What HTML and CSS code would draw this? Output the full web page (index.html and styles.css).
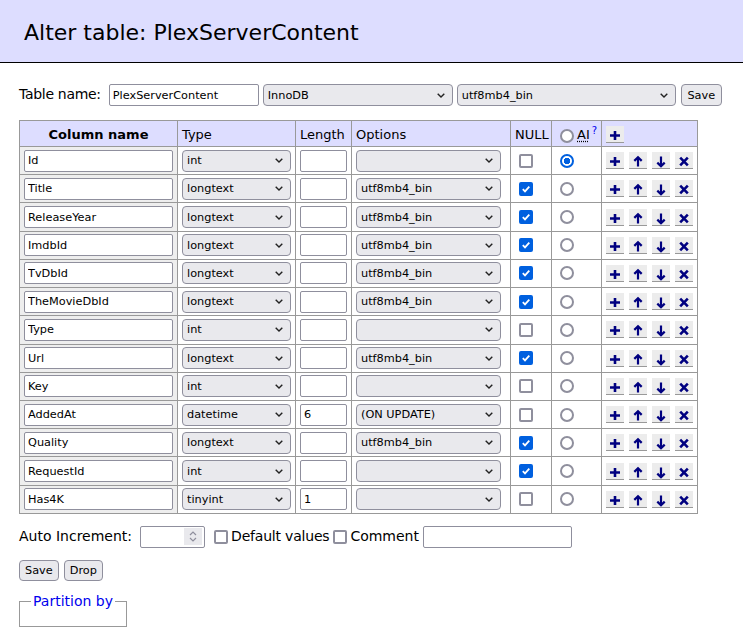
FILE: index.html
```html
<!DOCTYPE html>
<html>
<head>
<meta charset="utf-8">
<title>Alter table: PlexServerContent</title>
<link rel="stylesheet" href="styles.css">
</head>
<body>
<h2 class="title">Alter table: PlexServerContent</h2>
<div class="content">
<form>
<p class="row first"><span class="lbl">Table name:</span><input class="inp tname" value="PlexServerContent"><select class="sel engine"><option>InnoDB</option></select><select class="sel coll"><option>utf8mb4_bin</option></select><button type="button" class="btn top-save">Save</button></p>

<table class="edit">
<thead>
<tr>
<th class="c1">Column name</th>
<td class="c2">Type</td>
<td class="c3">Length</td>
<td class="c4">Options</td>
<td class="c5">NULL</td>
<td class="c6"><div class="ai"><input type="radio" class="rad" name="ai"><abbr title="Auto Increment">AI</abbr><sup><a href="#">?</a></sup></div></td>
<td class="c7"><div class="acts"><button type="button" class="ico"><svg viewBox="0 0 18 16" width="18" height="16"><path class="g" d="M9 5v9M4 9.5h10"/></svg></button></div></td>
</tr>
</thead>
<tbody>
<tr><th class="c1"><input class="inp cname" value="Id"></th><td><select class="sel type"><option>int</option></select></td><td><input class="inp len" value=""></td><td><select class="sel opt"><option></option></select></td><td><div class="box"><input type="checkbox" class="cb"></div></td><td><div class="box"><input type="radio" class="rad" name="ai" checked></div></td><td><div class="acts"><button type="button" class="ico"><svg viewBox="0 0 18 16" width="18" height="16"><path class="g" d="M9 5v9M4 9.5h10"/></svg></button><button type="button" class="ico"><svg viewBox="0 0 18 16" width="18" height="16"><path class="a" d="M9 6v8.5M5.3 8.9L9 5.2l3.7 3.7"/></svg></button><button type="button" class="ico"><svg viewBox="0 0 18 16" width="18" height="16"><path class="a" d="M9 4.5v8.3M5.3 10.6L9 14.3l3.7-3.7"/></svg></button><button type="button" class="ico"><svg viewBox="0 0 18 16" width="18" height="16"><path class="g" d="M5.2 5.7l7.6 7.6M12.8 5.7l-7.6 7.6"/></svg></button></div></td></tr>
<tr><th class="c1"><input class="inp cname" value="Title"></th><td><select class="sel type"><option>longtext</option></select></td><td><input class="inp len" value=""></td><td><select class="sel opt"><option>utf8mb4_bin</option></select></td><td><div class="box"><input type="checkbox" class="cb" checked></div></td><td><div class="box"><input type="radio" class="rad" name="ai"></div></td><td><div class="acts"><button type="button" class="ico"><svg viewBox="0 0 18 16" width="18" height="16"><path class="g" d="M9 5v9M4 9.5h10"/></svg></button><button type="button" class="ico"><svg viewBox="0 0 18 16" width="18" height="16"><path class="a" d="M9 6v8.5M5.3 8.9L9 5.2l3.7 3.7"/></svg></button><button type="button" class="ico"><svg viewBox="0 0 18 16" width="18" height="16"><path class="a" d="M9 4.5v8.3M5.3 10.6L9 14.3l3.7-3.7"/></svg></button><button type="button" class="ico"><svg viewBox="0 0 18 16" width="18" height="16"><path class="g" d="M5.2 5.7l7.6 7.6M12.8 5.7l-7.6 7.6"/></svg></button></div></td></tr>
<tr><th class="c1"><input class="inp cname" value="ReleaseYear"></th><td><select class="sel type"><option>longtext</option></select></td><td><input class="inp len" value=""></td><td><select class="sel opt"><option>utf8mb4_bin</option></select></td><td><div class="box"><input type="checkbox" class="cb" checked></div></td><td><div class="box"><input type="radio" class="rad" name="ai"></div></td><td><div class="acts"><button type="button" class="ico"><svg viewBox="0 0 18 16" width="18" height="16"><path class="g" d="M9 5v9M4 9.5h10"/></svg></button><button type="button" class="ico"><svg viewBox="0 0 18 16" width="18" height="16"><path class="a" d="M9 6v8.5M5.3 8.9L9 5.2l3.7 3.7"/></svg></button><button type="button" class="ico"><svg viewBox="0 0 18 16" width="18" height="16"><path class="a" d="M9 4.5v8.3M5.3 10.6L9 14.3l3.7-3.7"/></svg></button><button type="button" class="ico"><svg viewBox="0 0 18 16" width="18" height="16"><path class="g" d="M5.2 5.7l7.6 7.6M12.8 5.7l-7.6 7.6"/></svg></button></div></td></tr>
<tr><th class="c1"><input class="inp cname" value="ImdbId"></th><td><select class="sel type"><option>longtext</option></select></td><td><input class="inp len" value=""></td><td><select class="sel opt"><option>utf8mb4_bin</option></select></td><td><div class="box"><input type="checkbox" class="cb" checked></div></td><td><div class="box"><input type="radio" class="rad" name="ai"></div></td><td><div class="acts"><button type="button" class="ico"><svg viewBox="0 0 18 16" width="18" height="16"><path class="g" d="M9 5v9M4 9.5h10"/></svg></button><button type="button" class="ico"><svg viewBox="0 0 18 16" width="18" height="16"><path class="a" d="M9 6v8.5M5.3 8.9L9 5.2l3.7 3.7"/></svg></button><button type="button" class="ico"><svg viewBox="0 0 18 16" width="18" height="16"><path class="a" d="M9 4.5v8.3M5.3 10.6L9 14.3l3.7-3.7"/></svg></button><button type="button" class="ico"><svg viewBox="0 0 18 16" width="18" height="16"><path class="g" d="M5.2 5.7l7.6 7.6M12.8 5.7l-7.6 7.6"/></svg></button></div></td></tr>
<tr><th class="c1"><input class="inp cname" value="TvDbId"></th><td><select class="sel type"><option>longtext</option></select></td><td><input class="inp len" value=""></td><td><select class="sel opt"><option>utf8mb4_bin</option></select></td><td><div class="box"><input type="checkbox" class="cb" checked></div></td><td><div class="box"><input type="radio" class="rad" name="ai"></div></td><td><div class="acts"><button type="button" class="ico"><svg viewBox="0 0 18 16" width="18" height="16"><path class="g" d="M9 5v9M4 9.5h10"/></svg></button><button type="button" class="ico"><svg viewBox="0 0 18 16" width="18" height="16"><path class="a" d="M9 6v8.5M5.3 8.9L9 5.2l3.7 3.7"/></svg></button><button type="button" class="ico"><svg viewBox="0 0 18 16" width="18" height="16"><path class="a" d="M9 4.5v8.3M5.3 10.6L9 14.3l3.7-3.7"/></svg></button><button type="button" class="ico"><svg viewBox="0 0 18 16" width="18" height="16"><path class="g" d="M5.2 5.7l7.6 7.6M12.8 5.7l-7.6 7.6"/></svg></button></div></td></tr>
<tr><th class="c1"><input class="inp cname" value="TheMovieDbId"></th><td><select class="sel type"><option>longtext</option></select></td><td><input class="inp len" value=""></td><td><select class="sel opt"><option>utf8mb4_bin</option></select></td><td><div class="box"><input type="checkbox" class="cb" checked></div></td><td><div class="box"><input type="radio" class="rad" name="ai"></div></td><td><div class="acts"><button type="button" class="ico"><svg viewBox="0 0 18 16" width="18" height="16"><path class="g" d="M9 5v9M4 9.5h10"/></svg></button><button type="button" class="ico"><svg viewBox="0 0 18 16" width="18" height="16"><path class="a" d="M9 6v8.5M5.3 8.9L9 5.2l3.7 3.7"/></svg></button><button type="button" class="ico"><svg viewBox="0 0 18 16" width="18" height="16"><path class="a" d="M9 4.5v8.3M5.3 10.6L9 14.3l3.7-3.7"/></svg></button><button type="button" class="ico"><svg viewBox="0 0 18 16" width="18" height="16"><path class="g" d="M5.2 5.7l7.6 7.6M12.8 5.7l-7.6 7.6"/></svg></button></div></td></tr>
<tr><th class="c1"><input class="inp cname" value="Type"></th><td><select class="sel type"><option>int</option></select></td><td><input class="inp len" value=""></td><td><select class="sel opt"><option></option></select></td><td><div class="box"><input type="checkbox" class="cb"></div></td><td><div class="box"><input type="radio" class="rad" name="ai"></div></td><td><div class="acts"><button type="button" class="ico"><svg viewBox="0 0 18 16" width="18" height="16"><path class="g" d="M9 5v9M4 9.5h10"/></svg></button><button type="button" class="ico"><svg viewBox="0 0 18 16" width="18" height="16"><path class="a" d="M9 6v8.5M5.3 8.9L9 5.2l3.7 3.7"/></svg></button><button type="button" class="ico"><svg viewBox="0 0 18 16" width="18" height="16"><path class="a" d="M9 4.5v8.3M5.3 10.6L9 14.3l3.7-3.7"/></svg></button><button type="button" class="ico"><svg viewBox="0 0 18 16" width="18" height="16"><path class="g" d="M5.2 5.7l7.6 7.6M12.8 5.7l-7.6 7.6"/></svg></button></div></td></tr>
<tr><th class="c1"><input class="inp cname" value="Url"></th><td><select class="sel type"><option>longtext</option></select></td><td><input class="inp len" value=""></td><td><select class="sel opt"><option>utf8mb4_bin</option></select></td><td><div class="box"><input type="checkbox" class="cb" checked></div></td><td><div class="box"><input type="radio" class="rad" name="ai"></div></td><td><div class="acts"><button type="button" class="ico"><svg viewBox="0 0 18 16" width="18" height="16"><path class="g" d="M9 5v9M4 9.5h10"/></svg></button><button type="button" class="ico"><svg viewBox="0 0 18 16" width="18" height="16"><path class="a" d="M9 6v8.5M5.3 8.9L9 5.2l3.7 3.7"/></svg></button><button type="button" class="ico"><svg viewBox="0 0 18 16" width="18" height="16"><path class="a" d="M9 4.5v8.3M5.3 10.6L9 14.3l3.7-3.7"/></svg></button><button type="button" class="ico"><svg viewBox="0 0 18 16" width="18" height="16"><path class="g" d="M5.2 5.7l7.6 7.6M12.8 5.7l-7.6 7.6"/></svg></button></div></td></tr>
<tr><th class="c1"><input class="inp cname" value="Key"></th><td><select class="sel type"><option>int</option></select></td><td><input class="inp len" value=""></td><td><select class="sel opt"><option></option></select></td><td><div class="box"><input type="checkbox" class="cb"></div></td><td><div class="box"><input type="radio" class="rad" name="ai"></div></td><td><div class="acts"><button type="button" class="ico"><svg viewBox="0 0 18 16" width="18" height="16"><path class="g" d="M9 5v9M4 9.5h10"/></svg></button><button type="button" class="ico"><svg viewBox="0 0 18 16" width="18" height="16"><path class="a" d="M9 6v8.5M5.3 8.9L9 5.2l3.7 3.7"/></svg></button><button type="button" class="ico"><svg viewBox="0 0 18 16" width="18" height="16"><path class="a" d="M9 4.5v8.3M5.3 10.6L9 14.3l3.7-3.7"/></svg></button><button type="button" class="ico"><svg viewBox="0 0 18 16" width="18" height="16"><path class="g" d="M5.2 5.7l7.6 7.6M12.8 5.7l-7.6 7.6"/></svg></button></div></td></tr>
<tr><th class="c1"><input class="inp cname" value="AddedAt"></th><td><select class="sel type"><option>datetime</option></select></td><td><input class="inp len" value="6"></td><td><select class="sel opt"><option>(ON UPDATE)</option></select></td><td><div class="box"><input type="checkbox" class="cb"></div></td><td><div class="box"><input type="radio" class="rad" name="ai"></div></td><td><div class="acts"><button type="button" class="ico"><svg viewBox="0 0 18 16" width="18" height="16"><path class="g" d="M9 5v9M4 9.5h10"/></svg></button><button type="button" class="ico"><svg viewBox="0 0 18 16" width="18" height="16"><path class="a" d="M9 6v8.5M5.3 8.9L9 5.2l3.7 3.7"/></svg></button><button type="button" class="ico"><svg viewBox="0 0 18 16" width="18" height="16"><path class="a" d="M9 4.5v8.3M5.3 10.6L9 14.3l3.7-3.7"/></svg></button><button type="button" class="ico"><svg viewBox="0 0 18 16" width="18" height="16"><path class="g" d="M5.2 5.7l7.6 7.6M12.8 5.7l-7.6 7.6"/></svg></button></div></td></tr>
<tr><th class="c1"><input class="inp cname" value="Quality"></th><td><select class="sel type"><option>longtext</option></select></td><td><input class="inp len" value=""></td><td><select class="sel opt"><option>utf8mb4_bin</option></select></td><td><div class="box"><input type="checkbox" class="cb" checked></div></td><td><div class="box"><input type="radio" class="rad" name="ai"></div></td><td><div class="acts"><button type="button" class="ico"><svg viewBox="0 0 18 16" width="18" height="16"><path class="g" d="M9 5v9M4 9.5h10"/></svg></button><button type="button" class="ico"><svg viewBox="0 0 18 16" width="18" height="16"><path class="a" d="M9 6v8.5M5.3 8.9L9 5.2l3.7 3.7"/></svg></button><button type="button" class="ico"><svg viewBox="0 0 18 16" width="18" height="16"><path class="a" d="M9 4.5v8.3M5.3 10.6L9 14.3l3.7-3.7"/></svg></button><button type="button" class="ico"><svg viewBox="0 0 18 16" width="18" height="16"><path class="g" d="M5.2 5.7l7.6 7.6M12.8 5.7l-7.6 7.6"/></svg></button></div></td></tr>
<tr><th class="c1"><input class="inp cname" value="RequestId"></th><td><select class="sel type"><option>int</option></select></td><td><input class="inp len" value=""></td><td><select class="sel opt"><option></option></select></td><td><div class="box"><input type="checkbox" class="cb" checked></div></td><td><div class="box"><input type="radio" class="rad" name="ai"></div></td><td><div class="acts"><button type="button" class="ico"><svg viewBox="0 0 18 16" width="18" height="16"><path class="g" d="M9 5v9M4 9.5h10"/></svg></button><button type="button" class="ico"><svg viewBox="0 0 18 16" width="18" height="16"><path class="a" d="M9 6v8.5M5.3 8.9L9 5.2l3.7 3.7"/></svg></button><button type="button" class="ico"><svg viewBox="0 0 18 16" width="18" height="16"><path class="a" d="M9 4.5v8.3M5.3 10.6L9 14.3l3.7-3.7"/></svg></button><button type="button" class="ico"><svg viewBox="0 0 18 16" width="18" height="16"><path class="g" d="M5.2 5.7l7.6 7.6M12.8 5.7l-7.6 7.6"/></svg></button></div></td></tr>
<tr><th class="c1"><input class="inp cname" value="Has4K"></th><td><select class="sel type"><option>tinyint</option></select></td><td><input class="inp len" value="1"></td><td><select class="sel opt"><option></option></select></td><td><div class="box"><input type="checkbox" class="cb"></div></td><td><div class="box"><input type="radio" class="rad" name="ai"></div></td><td><div class="acts"><button type="button" class="ico"><svg viewBox="0 0 18 16" width="18" height="16"><path class="g" d="M9 5v9M4 9.5h10"/></svg></button><button type="button" class="ico"><svg viewBox="0 0 18 16" width="18" height="16"><path class="a" d="M9 6v8.5M5.3 8.9L9 5.2l3.7 3.7"/></svg></button><button type="button" class="ico"><svg viewBox="0 0 18 16" width="18" height="16"><path class="a" d="M9 4.5v8.3M5.3 10.6L9 14.3l3.7-3.7"/></svg></button><button type="button" class="ico"><svg viewBox="0 0 18 16" width="18" height="16"><path class="g" d="M5.2 5.7l7.6 7.6M12.8 5.7l-7.6 7.6"/></svg></button></div></td></tr>
</tbody>
</table>

<p class="row auto"><span class="lbl2">Auto Increment:</span><span class="num"><input class="numin"><span class="spin"><svg viewBox="0 0 18 17" width="18" height="17"><path d="M6 7l3-3 3 3M6 10l3 3 3-3" stroke="#8f8f9d" stroke-width="1.2" fill="none"/></svg></span></span><label class="chk chk1"><input type="checkbox" class="cb"><span class="dv">Default values</span></label><label class="chk chk2"><input type="checkbox" class="cb">Comment</label><input class="inp comment"></p>
<p class="row btns"><button type="button" class="btn">Save</button><button type="button" class="btn">Drop</button></p>
<fieldset class="part"><legend><a href="#">Partition by</a></legend></fieldset>
</form>
</div>
</body>
</html>
```
FILE: styles.css
```css
html, body { margin: 0; padding: 0; }
body {
  font-family: "DejaVu Sans", Verdana, sans-serif;
  font-size: 14px;
  line-height: 1.25;
  color: #000;
  background: #fff;
}
a { color: #0000ee; text-decoration: none; }

.title {
  margin: 0;
  font-size: 22px;
  font-weight: normal;
  line-height: 27px;
  background: #ddf;
  border-bottom: 1px solid #000;
  padding: 19px 24px 16px;
}

.content { padding: 0 19px; }
form { margin: 0; }

.row {
  display: flex;
  align-items: center;
  margin: 0;
}
.first { margin-top: 21px; gap: 4px; }
.first .lbl { letter-spacing: -0.3px; }
.first .tname { margin-left: 4px; }
.first .top-save { margin-left: 1px; width: 41px; }

.inp, .sel, .btn, .numin {
  font-family: "DejaVu Sans", Verdana, sans-serif;
  font-size: 11.3px;
  color: #000;
  box-sizing: border-box;
  height: 22px;
  margin: 0;
}
.inp {
  border: 1px solid #8f8f9d;
  border-radius: 2px;
  background: #fff;
  padding: 0 3px;
  outline: none;
}
.sel {
  appearance: none;
  -webkit-appearance: none;
  border: 1px solid #8f8f9d;
  border-radius: 4px;
  background: #e9e9ed url("data:image/svg+xml,%3Csvg xmlns='http://www.w3.org/2000/svg' width='8' height='5' viewBox='0 0 8 5'%3E%3Cpath d='M0.7 0.7L4 4l3.3-3.3' stroke='%23222' stroke-width='1.4' fill='none'/%3E%3C/svg%3E") no-repeat right 7px center;
  padding: 0 20px 0 4px;
}
.btn {
  appearance: none;
  border: 1px solid #8f8f9d;
  border-radius: 4px;
  background: #e9e9ed;
  padding: 0 5px;
}

.tname { width: 150px; }
.engine { width: 190px; }
.coll { width: 219px; }

.edit {
  margin-top: 14px;
  border-collapse: separate;
  border-spacing: 0;
  border-top: 1px solid #999;
  border-left: 1px solid #999;
  table-layout: fixed;
  width: 679px;
  font-size: 13px;
}
.edit th, .edit td {
  border-right: 1px solid #999;
  border-bottom: 1px solid #999;
  padding: 2.62px 4px;
  text-align: left;
  font-weight: normal;
  vertical-align: middle;
  box-sizing: border-box;
}
.edit thead th, .edit thead td {
  background: #ddf;
  height: 26px;
  padding-top: 0;
  padding-bottom: 3px;
  vertical-align: bottom;
}
.edit thead th { text-align: center; font-weight: bold; }
.edit tbody th { background: #eee; }

.c1 { width: 158px; }
.c2 { width: 118px; }
.c3 { width: 56px; }
.c4 { width: 159px; }
.c5 { width: 41px; }
.c6 { width: 50px; }
.c7 { width: 96px; }

.cname { width: 149px; display: block; }
.type { width: 109px; display: block; }
.len { width: 47px; display: block; }
.opt { width: 145px; display: block; }

.box { height: 22px; display: flex; align-items: center; padding-left: 4px; }

.cb, .rad {
  appearance: none;
  -webkit-appearance: none;
  width: 14px;
  height: 14px;
  box-sizing: border-box;
  margin: 0;
  border: 2px solid #8f8f9d;
  background: #fff;
  flex: none;
}
.cb { border-radius: 2px; }
.cb:checked {
  border-color: #0060df;
  background: #0060df url("data:image/svg+xml,%3Csvg xmlns='http://www.w3.org/2000/svg' width='10' height='10' viewBox='0 0 10 10'%3E%3Cpath d='M1.8 5.2l2.2 2.2 4.3-4.7' stroke='%23fff' stroke-width='1.8' fill='none'/%3E%3C/svg%3E") no-repeat center;
}
.rad { border-radius: 50%; }
.rad:checked {
  border-color: #0060df;
  background: radial-gradient(circle, #0060df 0 3px, #fff 3.5px);
}

.ai { display: flex; align-items: flex-end; padding-left: 4px; }
.ai .rad { margin-right: 3px; }
abbr { text-decoration: underline dotted; text-underline-offset: 2px; }
.ai sup { font-size: 10px; line-height: 1; align-self: flex-start; margin-left: 2px; margin-top: -1px; }

.acts { display: flex; gap: 5px; height: 22px; align-items: center; }
thead .acts { height: auto; align-items: flex-end; }
.ico {
  appearance: none;
  width: 18px;
  height: 17px;
  padding: 0;
  margin: 0;
  border: 0;
  border-bottom: 1px solid #999;
  background: #ececec;
  display: block;
  box-sizing: border-box;
}
.ico svg { display: block; }
.ico .g { stroke: #000080; stroke-width: 2.6; fill: none; }
.ico .a { stroke: #000080; stroke-width: 2.2; fill: none; }

.auto { margin-top: 12px; }
.num {
  display: inline-flex;
  align-items: center;
  width: 65px;
  height: 22px;
  box-sizing: border-box;
  border: 1px solid #8f8f9d;
  border-radius: 2px;
  margin-left: 8px;
}
.numin { border: 0; flex: 1; min-width: 0; height: 20px; padding: 0 3px; outline: none; background: transparent; }
.spin { width: 18px; height: 17px; background: #e9e9ed; margin-right: 2px; display: block; }
.spin svg { display: block; }
.chk { display: inline-flex; align-items: center; gap: 3px; }
.chk1 { margin-left: 9px; }
.chk1 .dv { letter-spacing: -0.2px; }
.chk2 { margin-left: 4px; }
.comment { width: 149px; margin-left: 4px; }

.btns { margin-top: 12px; gap: 5px; }
.btns .btn { height: 21px; }

.part {
  margin: 12px 0 0 0;
  padding: 7px 11px 9px;
  border: 1px solid #999;
  display: inline-block;
  min-width: 0;
}
.part legend { padding: 0 2px; font-size: 14px; }
```
